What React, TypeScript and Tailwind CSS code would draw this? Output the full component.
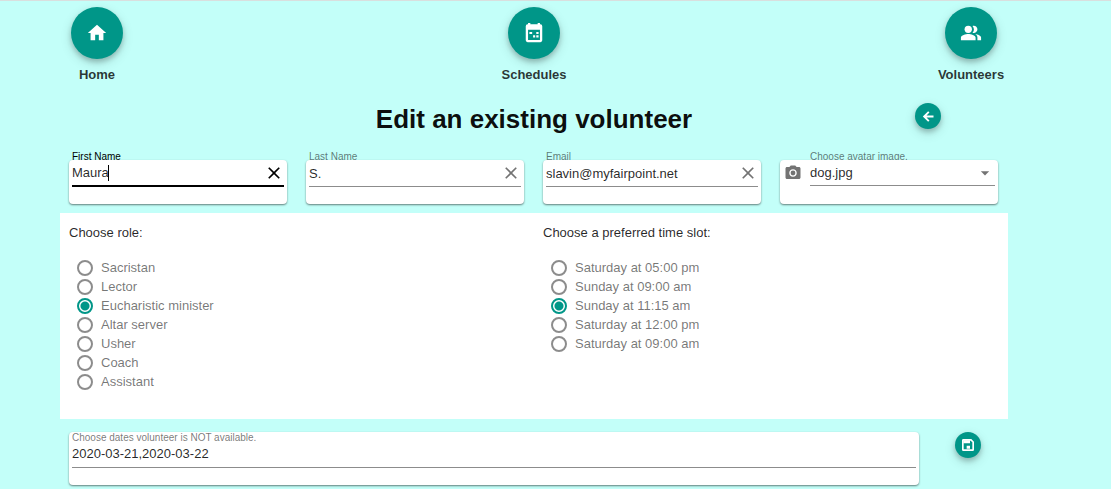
import { useState } from "react";
import type { ReactNode } from "react";
import { MdArrowDropDown, MdCameraAlt, MdClose, MdHome, MdPeopleAlt } from "react-icons/md";

const roles = ["Sacristan", "Lector", "Eucharistic minister", "Altar server", "Usher", "Coach", "Assistant"];
const slots = [
  "Saturday at 05:00 pm",
  "Sunday at 09:00 am",
  "Sunday at 11:15 am",
  "Saturday at 12:00 pm",
  "Saturday at 09:00 am",
];

function CalendarIcon() {
  return (
    <svg viewBox="0 0 24 24" className="size-[22px]" fill="currentColor" aria-hidden="true">
      <path
        fillRule="evenodd"
        d="M5.5 1h2.5v1.5h8V1h2.5v1.5h.5a2 2 0 0 1 2 2V20a2 2 0 0 1-2 2H5a2 2 0 0 1-2-2V4.5a2 2 0 0 1 2-2h.5ZM5.5 8.500v11h13v-11Z"
      />
      <path d="M7 11h3v2H7zM14.5 11H17v2h-2.5zM11 14.5h2.300V17H11zM14.5 14.500H17V17h-2.500z" />
    </svg>
  );
}

function BackIcon() {
  return (
    <svg
      viewBox="0 0 24 24"
      className="size-[15px]"
      fill="none"
      stroke="currentColor"
      strokeWidth="3"
      aria-hidden="true"
    >
      <path d="M20 12H6M12.500 4.500 5 12l7.500 7.500" />
    </svg>
  );
}

function SaveIcon() {
  return (
    <svg viewBox="0 0 24 24" className="size-4" fill="currentColor" aria-hidden="true">
      <path
        fillRule="evenodd"
        d="M5 3h12l4 4v12a2 2 0 0 1-2 2H5a2 2 0 0 1-2-2V5a2 2 0 0 1 2-2Zm.5 2.500v13h13V8L16 5.500Z"
      />
      <path d="M10 13h5v4.500h-5zM5 5h10v4.500H5z" />
    </svg>
  );
}

function NavItem({ label, icon }: { label: string; icon: ReactNode }) {
  return (
    <a href="#" className="flex w-[74px] flex-col items-center gap-2 text-[13px] leading-4 font-bold text-black/80">
      <span className="flex size-[52px] items-center justify-center rounded-full bg-[#009688] text-white shadow-[0_3px_5px_rgba(0,0,0,0.2),0_4px_12px_rgba(0,0,0,0.14)]">
        {icon}
      </span>
      {label}
    </a>
  );
}

function RoundButton({ label, icon }: { label: string; icon: ReactNode }) {
  return (
    <button
      type="button"
      aria-label={label}
      className="flex size-[26px] items-center justify-center rounded-full bg-[#009688] text-white shadow-[0_3px_5px_rgba(0,0,0,0.2),0_4px_12px_rgba(0,0,0,0.14)]"
    >
      {icon}
    </button>
  );
}

function TextField({ id, label, initial, active = false }: { id: string; label: string; initial: string; active?: boolean }) {
  const [value, setValue] = useState(initial);
  return (
    <div className="pr-[10px] pl-[9px]">
      <label htmlFor={id} className={`block h-[9px] pl-[3px] text-[10px] leading-3 ${active ? "text-black" : "text-black/55"}`}>
        {label}
      </label>
      <div className="relative h-11 rounded bg-white px-[3px] shadow-[0_1px_2px_rgba(0,0,0,0.5)]">
        <div className={`flex h-[27px] items-center ${active ? "border-b-2 border-black" : "border-b border-black/45"}`}>
          <input
            id={id}
            value={value}
            onChange={(e) => setValue(e.target.value)}
            className={`h-[25px] min-w-0 flex-1 bg-transparent text-[13px] text-black/85 outline-none ${active ? "caret-transparent" : ""}`}
          />
          <button type="button" aria-label={`Clear ${label}`} onClick={() => setValue("")} className={active ? "text-black" : "text-black/55"}>
            <MdClose className="size-5" />
          </button>
        </div>
        {active && <span className="absolute top-[5px] left-[39px] h-4 w-px bg-black" />}
      </div>
    </div>
  );
}

function RadioList({ name, title, items }: { name: string; title: string; items: string[] }) {
  const [picked, setPicked] = useState(2);
  return (
    <fieldset className="pl-[9px] text-[13px]">
      <legend className="mb-[17px] pt-3 leading-4 text-black/85">{title}</legend>
      {items.map((item, i) => (
        <label key={item} className="flex h-[19px] items-center gap-2 pl-2 text-black/55">
          <input
            type="radio"
            name={name}
            checked={picked === i}
            onChange={() => setPicked(i)}
            className="size-4 appearance-none rounded-full border-2 border-black/45 checked:border-[#009688] checked:bg-[radial-gradient(circle,#009688_4px,transparent_5px)]"
          />
          {item}
        </label>
      ))}
    </fieldset>
  );
}

export default function App() {
  const [avatar, setAvatar] = useState("dog.jpg");
  const [dates, setDates] = useState("2020-03-21,2020-03-22");
  return (
    <div className="min-h-screen border-t border-[#d9dfde] bg-[#c3fff9] pr-[103px] pl-[60px] font-['Liberation_Sans',Arial,sans-serif]">
      <nav className="flex justify-between pt-[6px]">
        <NavItem label="Home" icon={<MdHome className="size-[22px]" />} />
        <NavItem label="Schedules" icon={<CalendarIcon />} />
        <NavItem label="Volunteers" icon={<MdPeopleAlt className="size-[22px]" />} />
      </nav>
      <header className="mt-5 grid grid-cols-12">
        <h1 className="col-span-8 col-start-3 text-center text-[26px] leading-8 font-bold text-black/95">
          Edit an existing volunteer
        </h1>
        <div className="col-span-2 flex justify-center pr-[2px]">
          <RoundButton label="Back" icon={<BackIcon />} />
        </div>
      </header>
      <form onSubmit={(e) => e.preventDefault()}>
        <div className="mt-4 grid grid-cols-4">
          <TextField id="first" label="First Name" initial="Maura" active />
          <TextField id="last" label="Last Name" initial="S." />
          <TextField id="email" label="Email" initial="slavin@myfairpoint.net" />
          <div className="pr-[10px] pl-[9px]">
            <label htmlFor="avatar" className="block h-[9px] pl-[30px] text-[10px] leading-3 text-black/55">
              Choose avatar image.
            </label>
            <div className="relative flex h-11 rounded bg-white pr-[3px] pl-1 shadow-[0_1px_2px_rgba(0,0,0,0.5)]">
              <MdCameraAlt className="mt-1 mr-2 size-[18px] text-black/55" />
              <div className="flex h-[26px] flex-1 items-center border-b border-black/45">
                <select
                  id="avatar"
                  value={avatar}
                  onChange={(e) => setAvatar(e.target.value)}
                  className="h-[25px] flex-1 appearance-none bg-transparent text-[13px] text-black/85 outline-none"
                >
                  <option>dog.jpg</option>
                </select>
                <MdArrowDropDown className="size-5 text-black/55" />
              </div>
            </div>
          </div>
        </div>
        <div className="mt-[9px] grid min-h-[206px] grid-cols-2 bg-white">
          <RadioList name="role" title="Choose role:" items={roles} />
          <RadioList name="slot" title="Choose a preferred time slot:" items={slots} />
        </div>
        <div className="mt-[13px] grid grid-cols-12">
          <div className="col-span-11 pr-[10px] pl-[9px]">
            <div className="h-[53px] rounded bg-white px-[3px] shadow-[0_1px_2px_rgba(0,0,0,0.5)]">
              <label htmlFor="dates" className="block text-[10px] leading-3 text-black/55">
                Choose dates volunteer is NOT available.
              </label>
              <input
                id="dates"
                value={dates}
                onChange={(e) => setDates(e.target.value)}
                className="block h-6 w-full border-b border-black/45 bg-transparent pb-[5px] text-[13px] text-black/85 outline-none"
              />
            </div>
          </div>
          <div className="flex justify-center pr-[2px]">
            <RoundButton label="Save" icon={<SaveIcon />} />
          </div>
        </div>
      </form>
    </div>
  );
}
